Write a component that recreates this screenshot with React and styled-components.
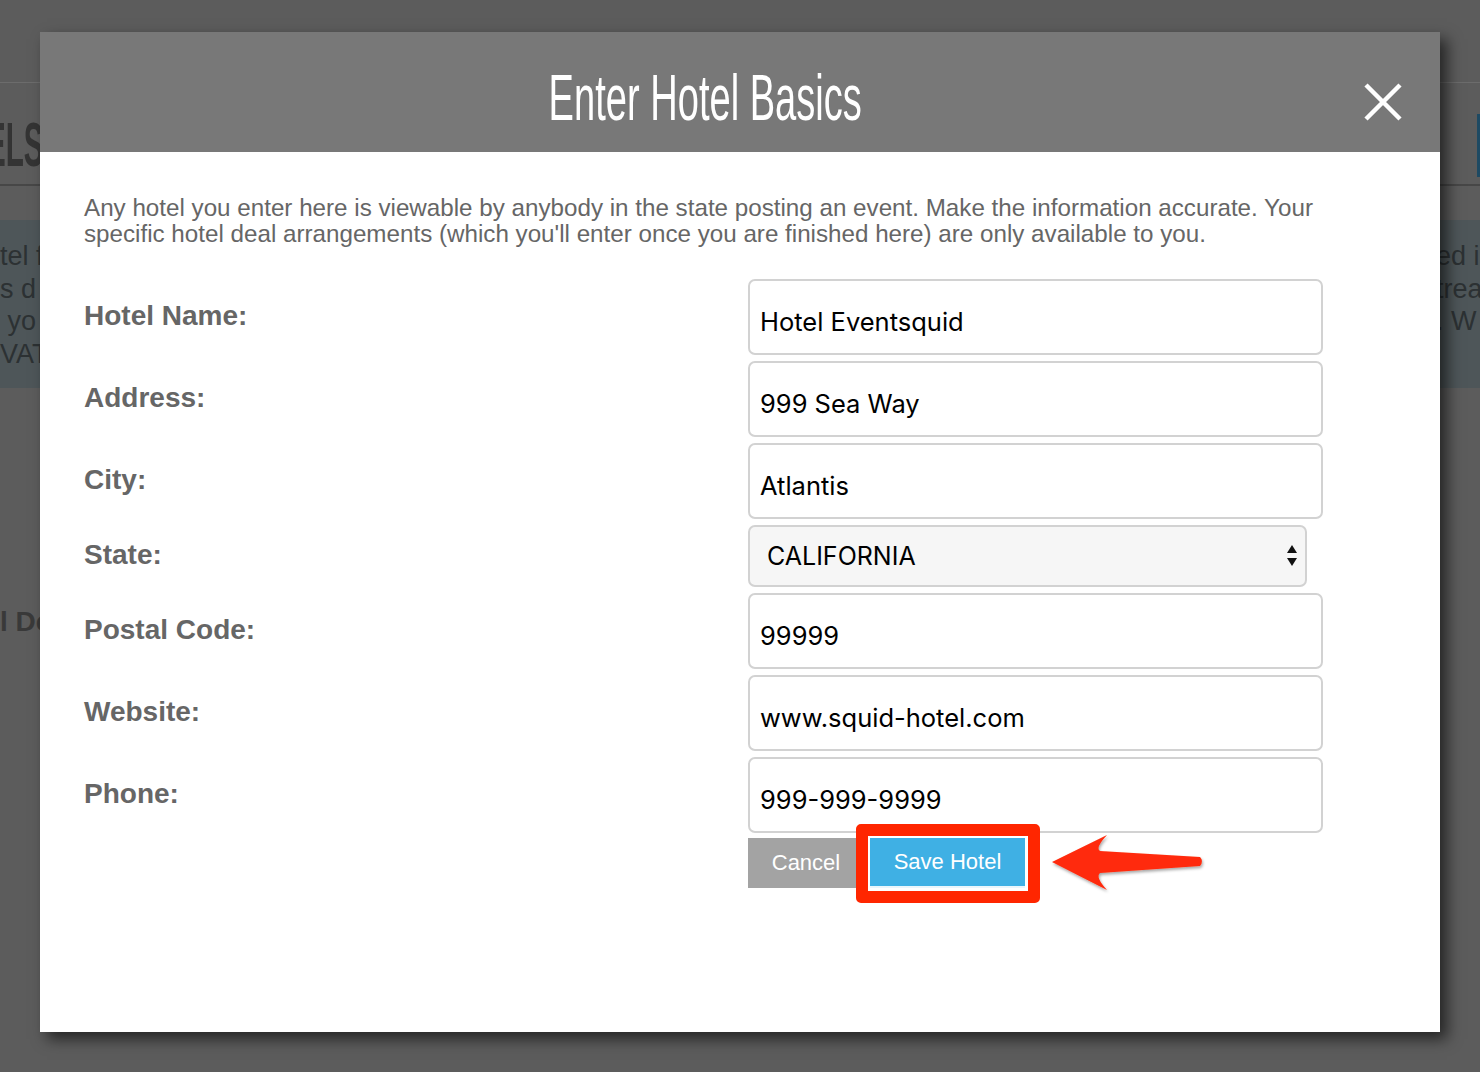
import React from "react";
import styled, { createGlobalStyle } from "styled-components";

const GlobalStyle = createGlobalStyle`
  html, body {
    margin: 0;
    padding: 0;
    background: #5c5c5c;
    overflow: hidden;
  }
  * { box-sizing: border-box; }
`;

const fields = [
  { label: "Hotel Name:", value: "Hotel Eventsquid" },
  { label: "Address:", value: "999 Sea Way" },
  { label: "City:", value: "Atlantis" },
  { label: "State:", value: "CALIFORNIA", select: true },
  { label: "Postal Code:", value: "99999" },
  { label: "Website:", value: "www.squid-hotel.com" },
  { label: "Phone:", value: "999-999-9999" },
];

const App = () => {
  return (
    <Page>
      <GlobalStyle />
      <Backdrop>
        <TopBar />
        <TitleRow>
          <PageHeading>
            <span>HOTELS</span>
          </PageHeading>
          <BlueTab />
        </TitleRow>
        <InfoBand>
          <BandText>
            <div>tel f</div>
            <div>s d</div>
            <div>&nbsp;yo</div>
            <div>VAT</div>
          </BandText>
          <BandText $right>
            <div>ed in</div>
            <div>trea</div>
            <div>. W</div>
          </BandText>
        </InfoBand>
        <SectionHeading>l Deals</SectionHeading>
      </Backdrop>

      <Modal>
        <Header>
          <Title>
            <span>Enter Hotel Basics</span>
          </Title>
          <CloseButton aria-label="close">
            <svg width="38" height="38" viewBox="0 0 38 38">
              <path d="M2 2 L36 36 M36 2 L2 36" stroke="#fff" strokeWidth="4.5" fill="none" />
            </svg>
          </CloseButton>
        </Header>
        <Body>
          <Intro>
            Any hotel you enter here is viewable by anybody in the state posting an event. Make the information accurate. Your specific hotel deal arrangements (which you'll enter once you are finished here) are only available to you.
          </Intro>
          <Form>
            {fields.map((f) => (
              <React.Fragment key={f.label}>
                <Label>{f.label}</Label>
                {f.select ? (
                  <SelectWrap>
                    <Select defaultValue={f.value}>
                      <option>{f.value}</option>
                    </Select>
                    <SelectArrows width="12" height="24" viewBox="0 0 12 24">
                      <path d="M6 1 L11 9 L1 9 Z M1 14 L11 14 L6 22 Z" fill="#111" />
                    </SelectArrows>
                  </SelectWrap>
                ) : (
                  <TextInput defaultValue={f.value} />
                )}
              </React.Fragment>
            ))}
            <span />
            <Actions>
              <Button $kind="cancel">Cancel</Button>
              <Highlight>
                <Button $kind="save">Save Hotel</Button>
                <RedBox />
                <Arrow width="165" height="68" viewBox="0 0 165 68">
                  <defs>
                    <filter id="sh" x="-10%" y="-20%" width="130%" height="150%">
                      <feDropShadow dx="1" dy="2" stdDeviation="1.5" floodColor="#000" floodOpacity="0.35" />
                    </filter>
                  </defs>
                  <path
                    d="M7 34 L62 7 Q50 20 55 23 L155 29 Q159 33 155 38 L55 45 Q50 49 62 62 Z"
                    fill="#ff2a0a"
                    filter="url(#sh)"
                  />
                </Arrow>
              </Highlight>
            </Actions>
          </Form>
        </Body>
      </Modal>
    </Page>
  );
};

export default App;

const Page = styled.div`
  position: relative;
  width: 1480px;
  height: 1072px;
  overflow: hidden;
  background: #5c5c5c;
  font-family: "Liberation Sans", Arial, sans-serif;
`;

const Backdrop = styled.div`
  display: flex;
  flex-direction: column;
`;

const TopBar = styled.div`
  height: 83px;
  border-bottom: 1px solid #6c6c6c;
`;

const TitleRow = styled.div`
  height: 103px;
  display: flex;
  justify-content: space-between;
  border-bottom: 2px solid #474747;
`;

const PageHeading = styled.div`
  width: 44px;
  overflow: hidden;
  display: flex;
  justify-content: flex-end;
  padding-top: 26px;

  span {
    display: inline-block;
    white-space: nowrap;
    font-family: "Liberation Sans Narrow", "Liberation Sans", sans-serif;
    font-weight: bold;
    font-size: 63px;
    line-height: 70px;
    color: #343434;
    transform: scaleX(0.47);
    transform-origin: right center;
  }
`;

const BlueTab = styled.div`
  width: 3px;
  height: 63px;
  margin-top: 31px;
  background: #1e4a63;
`;

const InfoBand = styled.div`
  margin-top: 34px;
  height: 168px;
  background: #4e5659;
  display: flex;
  justify-content: space-between;
  padding-top: 20px;
`;

const BandText = styled.div`
  width: ${(p) => (p.$right ? "44px" : "60px")};
  overflow: hidden;
  white-space: nowrap;
  font-size: 27px;
  line-height: 32.5px;
  color: #2c3133;
`;

const SectionHeading = styled.div`
  margin-top: 218px;
  font-weight: bold;
  font-size: 28px;
  line-height: 32px;
  color: #393939;
  white-space: nowrap;
`;

const Modal = styled.div`
  position: absolute;
  top: 32px;
  left: 40px;
  width: 1400px;
  height: 1000px;
  background: #fff;
  box-shadow: 7px 7px 14px rgba(0, 0, 0, 0.6);
  display: flex;
  flex-direction: column;
`;

const Header = styled.div`
  height: 120px;
  flex-shrink: 0;
  background: #787878;
  display: flex;
  align-items: center;
  padding-right: 38px;
`;

const Title = styled.h2`
  flex: 1;
  margin: 0;
  padding: 12px 0 0 7px;
  text-align: center;
  font-weight: normal;

  span {
    display: inline-block;
    font-family: "Liberation Sans Narrow", "Liberation Sans", sans-serif;
    font-size: 64px;
    line-height: 70px;
    color: #fff;
    transform: scaleX(0.595);
    white-space: nowrap;
  }
`;

const CloseButton = styled.button`
  width: 38px;
  height: 38px;
  padding: 0;
  margin-top: 20px;
  border: none;
  background: none;
  display: flex;
  cursor: pointer;
`;

const Body = styled.div`
  padding: 43px 117px 0 44px;
`;

const Intro = styled.p`
  margin: 0;
  font-size: 24.2px;
  line-height: 26px;
  color: #666;
`;

const Form = styled.div`
  margin-top: 32px;
  display: grid;
  grid-template-columns: 664px 1fr;
  row-gap: 6px;
`;

const Label = styled.div`
  align-self: center;
  font-weight: bold;
  font-size: 28px;
  color: #666;
  margin-top: -2px;
`;

const TextInput = styled.input`
  width: 100%;
  height: 76px;
  border: 2px solid #d2d2d2;
  border-radius: 7px;
  padding: 8px 10px 0;
  font-family: Inter, "Liberation Sans", sans-serif;
  font-size: 25.5px;
  color: #000;
  background: #fff;
  outline: none;
`;

const SelectWrap = styled.div`
  position: relative;
  width: 559px;
  height: 62px;
`;

const Select = styled.select`
  appearance: none;
  width: 100%;
  height: 100%;
  border: 2px solid #d2d2d2;
  border-radius: 7px;
  padding: 0 17px;
  background: #f6f6f6;
  font-family: Inter, "Liberation Sans", sans-serif;
  font-size: 25px;
  color: #000;
  outline: none;
`;

const SelectArrows = styled.svg`
  position: absolute;
  right: 9px;
  top: 19px;
  pointer-events: none;
`;

const Actions = styled.div`
  display: flex;
  align-items: flex-start;
  gap: 6px;
  margin-top: -1px;
`;

const Button = styled.button`
  height: 50px;
  border: none;
  border-radius: 0;
  padding: 0;
  font-family: "Liberation Sans", Arial, sans-serif;
  font-size: 22px;
  color: #fff;
  cursor: pointer;
  width: ${(p) => (p.$kind === "save" ? "155px" : "116px")};
  background: ${(p) => (p.$kind === "save" ? "#3fb0e4" : "#a3a3a3")};
  border-bottom: ${(p) => (p.$kind === "save" ? "2px solid #eaf6fc" : "none")};
  position: relative;
  z-index: 1;
`;

const Highlight = styled.div`
  position: relative;
  display: flex;
`;

const RedBox = styled.div`
  position: absolute;
  top: -14px;
  left: -14px;
  right: -15px;
  bottom: -15px;
  border: 12px solid #ff2600;
  border-radius: 5px;
  z-index: 2;
  pointer-events: none;
`;

const Arrow = styled.svg`
  position: absolute;
  left: 175px;
  top: -10px;
  z-index: 2;
`;
